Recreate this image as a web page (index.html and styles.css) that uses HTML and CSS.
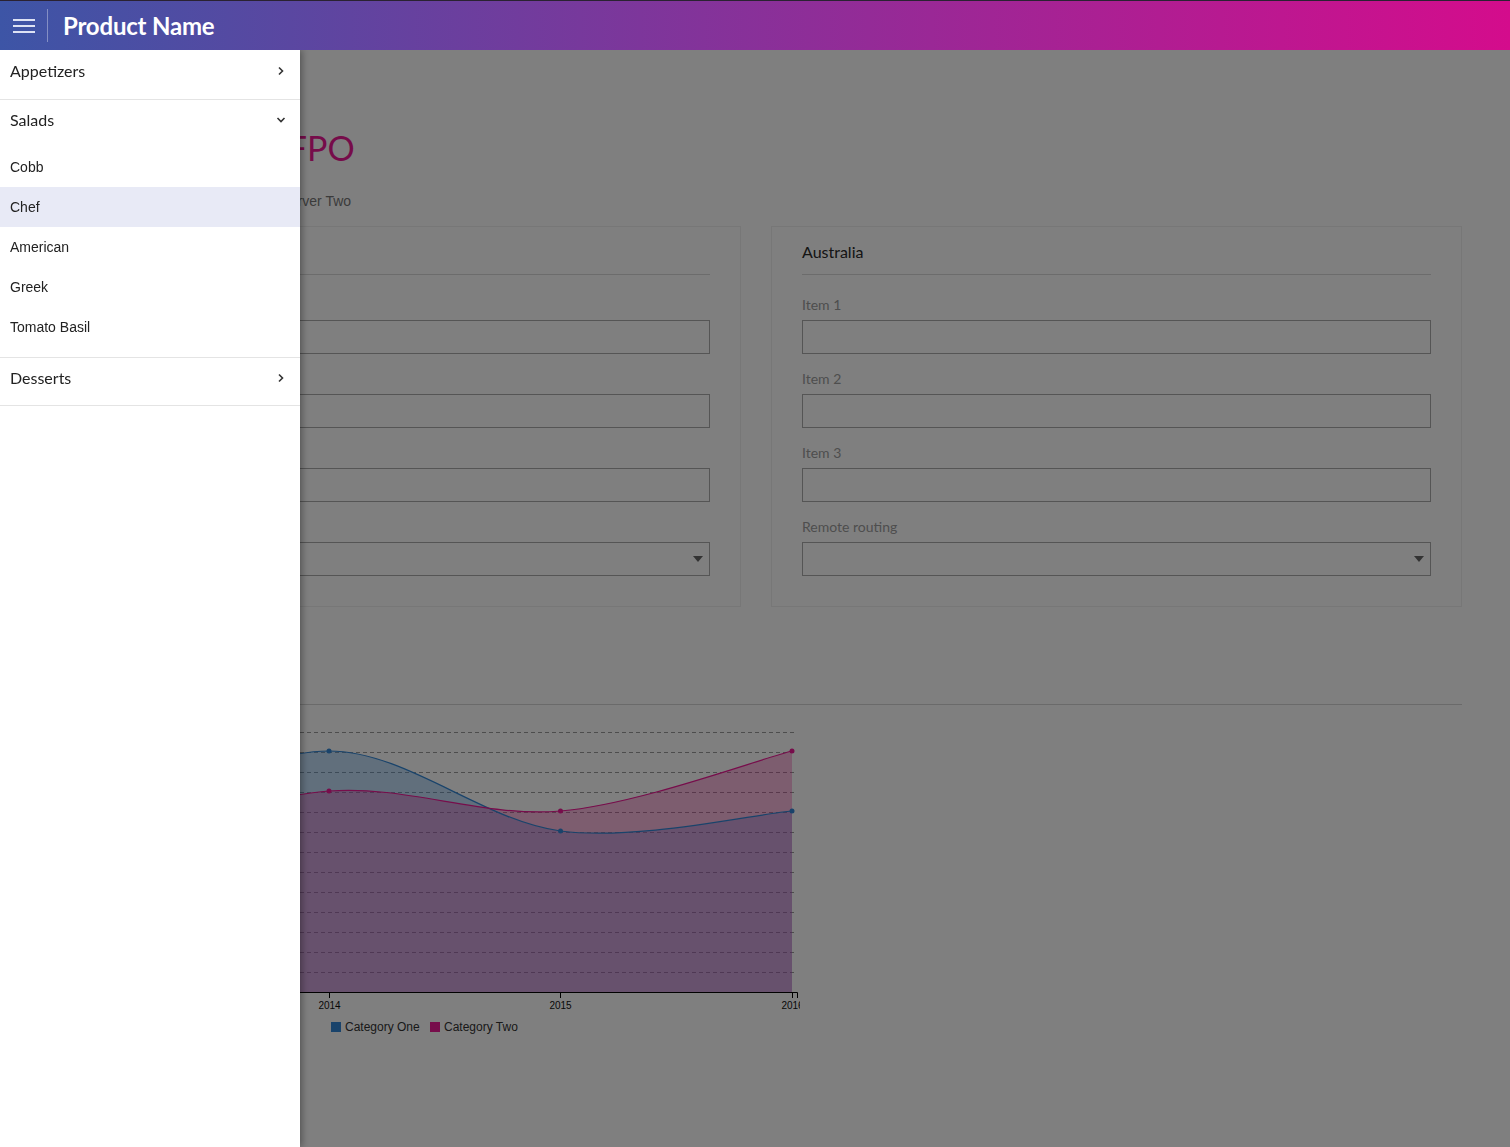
FILE: index.html
```html
<!DOCTYPE html>
<html lang="en">
<head>
<meta charset="utf-8">
<title>Product Name</title>
<link rel="stylesheet" href="styles.css">
</head>
<body>
<header class="topbar">
  <div class="menu-btn" aria-label="Menu"><span></span><span></span><span></span></div>
  <div class="topbar-divider"></div>
  <div class="brand">Product Name</div>
</header>

<main class="content">
  <h1 class="page-title">Services Health FPO</h1>
  <p class="page-sub">Home / Overview / Datacenter One / Server Two</p>

  <div class="cards">
    <section class="card">
      <h3 class="card-title">North America</h3>
      <div class="field"><label class="field-label">Item 1</label><div class="input"></div></div>
      <div class="field"><label class="field-label">Item 2</label><div class="input"></div></div>
      <div class="field"><label class="field-label">Item 3</label><div class="input"></div></div>
      <div class="field"><label class="field-label">Remote routing</label><div class="input select"></div></div>
    </section>
    <section class="card">
      <h3 class="card-title">Australia</h3>
      <div class="field"><label class="field-label">Item 1</label><div class="input"></div></div>
      <div class="field"><label class="field-label">Item 2</label><div class="input"></div></div>
      <div class="field"><label class="field-label">Item 3</label><div class="input"></div></div>
      <div class="field"><label class="field-label">Remote routing</label><div class="input select"></div></div>
    </section>
  </div>

  <section class="chart-section">
    <h2 class="section-title">Trends</h2>
    <svg class="chart" width="750" height="320" viewBox="0 0 750 320">
      <g class="grid">
        <line x1="40" x2="747" y1="12" y2="12"/>
        <line x1="40" x2="747" y1="32" y2="32"/>
        <line x1="40" x2="747" y1="52" y2="52"/>
        <line x1="40" x2="747" y1="72" y2="72"/>
        <line x1="40" x2="747" y1="92" y2="92"/>
        <line x1="40" x2="747" y1="112" y2="112"/>
        <line x1="40" x2="747" y1="132" y2="132"/>
        <line x1="40" x2="747" y1="152" y2="152"/>
        <line x1="40" x2="747" y1="172" y2="172"/>
        <line x1="40" x2="747" y1="192" y2="192"/>
        <line x1="40" x2="747" y1="212" y2="212"/>
        <line x1="40" x2="747" y1="232" y2="232"/>
        <line x1="40" x2="747" y1="252" y2="252"/>
      </g>
      <path class="area-one" d="M47.5,111 C86.1,97.7 201.8,31 279,31 C356.2,31 433.3,101 510.5,111 C587.7,121 703.4,94.3 742,91 L742,272 L47.5,272 Z"/>
      <path class="area-two" d="M47.5,127 C86.1,117.7 201.8,77 279,71 C356.2,65 433.3,97.7 510.5,91 C587.7,84.3 703.4,41 742,31 L742,272 L47.5,272 Z"/>
      <path class="line-one" d="M47.5,111 C86.1,97.7 201.8,31 279,31 C356.2,31 433.3,101 510.5,111 C587.7,121 703.4,94.3 742,91"/>
      <path class="line-two" d="M47.5,127 C86.1,117.7 201.8,77 279,71 C356.2,65 433.3,97.7 510.5,91 C587.7,84.3 703.4,41 742,31"/>
      <g class="dots-one">
        <circle cx="47.5" cy="111" r="2.5"/><circle cx="279" cy="31" r="2.5"/><circle cx="510.5" cy="111" r="2.5"/><circle cx="742" cy="91" r="2.5"/>
      </g>
      <g class="dots-two">
        <circle cx="47.5" cy="127" r="2.5"/><circle cx="279" cy="71" r="2.5"/><circle cx="510.5" cy="91" r="2.5"/><circle cx="742" cy="31" r="2.5"/>
      </g>
      <path class="axis" d="M40.5,278 V272.5 H747.5 V278"/>
      <g class="ticks">
        <line x1="47.5" x2="47.5" y1="272" y2="278"/>
        <line x1="279.5" x2="279.5" y1="272" y2="278"/>
        <line x1="510.5" x2="510.5" y1="272" y2="278"/>
        <line x1="742.5" x2="742.5" y1="272" y2="278"/>
      </g>
      <g class="tick-labels">
        <text x="47.5" y="289">2013</text>
        <text x="279.5" y="289">2014</text>
        <text x="510.5" y="289">2015</text>
        <text x="742.5" y="289">2016</text>
      </g>
      <g class="legend">
        <rect class="key-one" x="281" y="302" width="10" height="10"/>
        <text x="295" y="311">Category One</text>
        <rect class="key-two" x="380" y="302" width="10" height="10"/>
        <text x="394" y="311">Category Two</text>
      </g>
    </svg>
  </section>
</main>

<div class="scrim"></div>

<nav class="drawer">
  <div class="nav-group first">
    <div class="nav-head">
      <span>Appetizers</span>
      <svg class="chev" width="10" height="10" viewBox="0 0 10 10"><path d="M3 1.5 L6.5 5 L3 8.5"/></svg>
    </div>
  </div>
  <div class="nav-group open">
    <div class="nav-head">
      <span>Salads</span>
      <svg class="chev" width="10" height="10" viewBox="0 0 10 10"><path d="M1.5 3 L5 6.5 L8.5 3"/></svg>
    </div>
    <ul class="nav-sub">
      <li class="nav-item">Cobb</li>
      <li class="nav-item active">Chef</li>
      <li class="nav-item">American</li>
      <li class="nav-item">Greek</li>
      <li class="nav-item">Tomato Basil</li>
    </ul>
  </div>
  <div class="nav-group">
    <div class="nav-head">
      <span>Desserts</span>
      <svg class="chev" width="10" height="10" viewBox="0 0 10 10"><path d="M3 1.5 L6.5 5 L3 8.5"/></svg>
    </div>
  </div>
</nav>
</body>
</html>
```

FILE: styles.css
```css
* { box-sizing: border-box; }

html, body {
  margin: 0;
  padding: 0;
}

body {
  font-family: Lato, "Liberation Sans", sans-serif;
  color: #333;
  background: #fff;
  overflow: hidden;
  height: 1147px;
}

/* ---------- top bar ---------- */
.topbar {
  height: 50px;
  border-top: 1px solid #2a2232;
  background: linear-gradient(90deg, #3d55a6 0%, #d40c8c 100%);
  display: flex;
  align-items: center;
  position: relative;
  z-index: 4;
}

.menu-btn {
  width: 22px;
  margin-left: 13px;
  display: flex;
  flex-direction: column;
  gap: 4px;
}

.menu-btn span {
  display: block;
  height: 2px;
  background: #dde2f4;
}

.topbar-divider {
  width: 1px;
  height: 33px;
  margin-left: 12px;
  background: rgba(255, 255, 255, 0.35);
}

.brand {
  margin-left: 15px;
  color: #fff;
  font-family: Lato, sans-serif;
  font-weight: 700;
  font-size: 24px;
  line-height: 30px;
  letter-spacing: -0.2px;
}

/* ---------- content ---------- */
.content {
  padding: 78px 48px 0 50px;
}

.page-title {
  margin: 0;
  font-family: Lato, sans-serif;
  font-weight: 400;
  font-size: 34px;
  line-height: 40px;
  word-spacing: -1px;
  color: #ec1894;
}

.page-sub {
  margin: 24px 0 0;
  font-family: "Liberation Sans", Arial, sans-serif;
  font-size: 14px;
  line-height: 18px;
  color: #777;
  padding-left: 1px;
}

.cards {
  margin-top: 16px;
  display: grid;
  grid-template-columns: 1fr 1fr;
  gap: 30px;
}

.card {
  border: 1px solid #eee;
  padding: 0 30px 30px;
}

.card-title {
  margin: 0;
  padding: 15px 0 12px;
  font-size: 16px;
  line-height: 20px;
  font-weight: 400;
  color: #2a2a2a;
  border-bottom: 1px solid #d9d9d9;
}

.field {
  margin-top: 16px;
}

.field:first-of-type {
  margin-top: 21px;
}

.field-label {
  display: block;
  font-size: 14px;
  line-height: 18px;
  color: #9c9c9c;
  margin-bottom: 6px;
}

.input {
  height: 34px;
  border: 1px solid #aaa;
  background: transparent;
}

.select {
  position: relative;
}

.select::after {
  content: "";
  position: absolute;
  right: 6px;
  top: 13px;
  border-left: 5px solid transparent;
  border-right: 5px solid transparent;
  border-top: 6px solid #666;
}

/* ---------- chart ---------- */
.section-title {
  margin: 62px 0 0;
  font-size: 20px;
  line-height: 35px;
  font-weight: 400;
  color: #333;
  border-bottom: 1px solid #d4d4d4;
}

.chart {
  display: block;
  margin-top: 15px;
  overflow: hidden;
}

.grid line {
  stroke: #9a9a9a;
  stroke-width: 1;
  stroke-dasharray: 4 3;
  shape-rendering: crispEdges;
}

.area-one { fill: #3592e8; fill-opacity: 0.3; }
.area-two { fill: #ee1a96; fill-opacity: 0.3; }

.line-one, .line-two {
  fill: none;
  stroke-width: 1.2;
}
.line-one { stroke: #3387d6; }
.line-two { stroke: #ee1a96; }

.dots-one circle { fill: #3387d6; }
.dots-two circle { fill: #ee1a96; }

.axis {
  fill: none;
  stroke: #000;
  stroke-width: 1;
}

.ticks line {
  stroke: #000;
  stroke-width: 1;
}

.tick-labels text {
  font-family: "Liberation Sans", Arial, sans-serif;
  font-size: 10px;
  fill: #111;
  text-anchor: middle;
}

.legend text {
  font-family: "Liberation Sans", Arial, sans-serif;
  font-size: 12px;
  fill: #333;
}

.key-one { fill: #3387d6; }
.key-two { fill: #ee1a96; }

/* ---------- overlay + drawer ---------- */
.scrim {
  position: fixed;
  top: 50px;
  left: 0;
  right: 0;
  bottom: 0;
  background: rgba(0, 0, 0, 0.5);
  z-index: 2;
}

.drawer {
  position: fixed;
  top: 50px;
  left: 0;
  bottom: 0;
  width: 300px;
  background: #fff;
  box-shadow: 2px 0 7px rgba(0, 0, 0, 0.35);
  z-index: 3;
}

.nav-group {
  border-bottom: 1px solid #e4e4e4;
}

.nav-head {
  height: 47px;
  padding: 0 14px 8px 10px;
  display: flex;
  align-items: center;
  justify-content: space-between;
  font-size: 16px;
  color: #222;
}

.first .nav-head {
  height: 49px;
}

.chev path {
  fill: none;
  stroke: #333;
  stroke-width: 1.6;
}

.nav-sub {
  list-style: none;
  margin: 0;
  padding: 0 0 10px;
}

.nav-item {
  height: 40px;
  line-height: 40px;
  padding-left: 10px;
  font-family: "Liberation Sans", Arial, sans-serif;
  font-size: 14px;
  color: #222;
}

.nav-item.active {
  background: #e8eaf6;
}
```
